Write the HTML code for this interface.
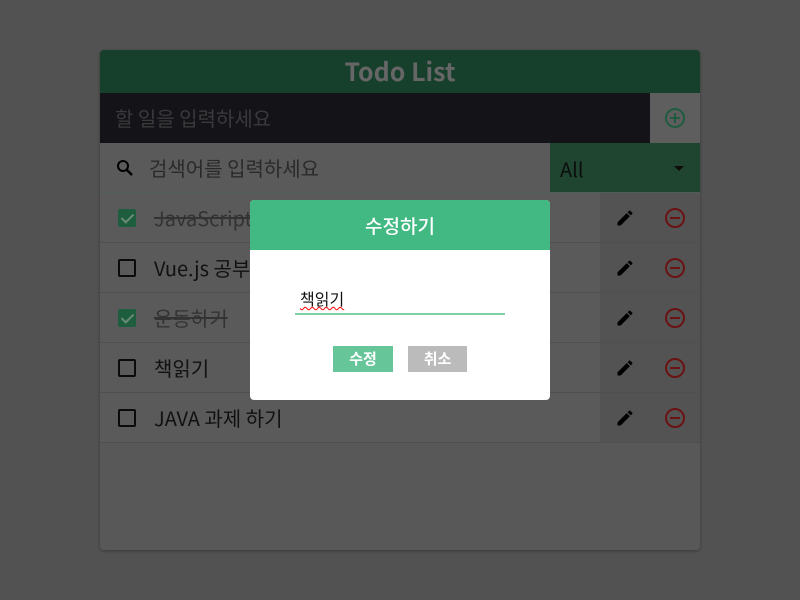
<!DOCTYPE html>
<html><head><meta charset="utf-8"><style>
*{box-sizing:border-box;margin:0;padding:0}
body{width:800px;height:600px;background:#525252;font-family:"Noto Sans CJK KR","Liberation Sans",sans-serif;position:relative;overflow:hidden}
.card{position:absolute;left:100px;top:50px;width:600px;height:500px;background:#585858;border-radius:4px;overflow:hidden;box-shadow:0 1px 3px rgba(0,0,0,.3)}
.hdr{height:43px;background:#163f2c;color:#666;font-weight:bold;font-size:25px;text-align:center;line-height:43px}
.inp{height:50px;display:flex}
.inp .t{flex:1;background:#141418;color:#3a3a3c;font-size:20px;line-height:50px;padding-left:15px}
.inp .p{width:50px;background:#5e5e5e;display:flex;align-items:center;justify-content:center}
.srch{height:50px;display:flex;border-bottom:1px solid #4e5e55;background:#5a5a5a}
.srch .s{flex:1;display:flex;align-items:center;color:#2a2a2a;font-size:20px}
.srch .sel{width:150px;background:#1f4531;color:#0d0d0d;font-size:20px;line-height:52px;padding-left:10px;position:relative}
.srch .sel:after{content:"";position:absolute;right:16px;top:23px;border:5px solid transparent;border-top-color:#0d0d0d;border-bottom:0}
.row{height:50px;display:flex;border-bottom:1px solid #4f4f4f;background:#5a5a5a}
.row .c{width:54px;display:flex;align-items:center;justify-content:center}
.box{width:18px;height:18px;border:2px solid #0b0b0b;border-radius:2px}
.box.on{background:#1e5e3f;border-color:#1e5e3f;position:relative}
.box.on:after{content:"";position:absolute;left:4px;top:0px;width:5px;height:10px;border:solid #6a8a78;border-width:0 2px 2px 0;transform:rotate(45deg)}
.row .tx{flex:1;font-size:20px;line-height:50px;color:#111;padding-left:0}
.row .tx.d{text-decoration:line-through;color:#333}
.row .a{width:100px;background:#535353;display:flex;align-items:center;justify-content:space-around}
.modal{position:absolute;left:250px;top:200px;width:300px;height:200px;background:#fff;border-radius:4px;overflow:hidden}
.mh{height:50px;background:#42b983;color:#fff;font-size:19px;font-weight:500;text-align:center;line-height:52px}
.mi{position:absolute;left:45px;top:84px;width:210px;height:31px;border-bottom:2px solid #7ecfa6;font-size:16px;padding-left:5px;line-height:28px;color:#111}
.mi span{text-decoration:underline wavy red;text-decoration-thickness:1px}
.b{position:absolute;top:146px;height:26px;color:#fff;font-weight:bold;font-size:15px;text-align:center;line-height:26px}
</style></head><body>
<div class="card">
<div class="hdr">Todo List</div>
<div class="inp"><div class="t">할 일을 입력하세요</div><div class="p"><svg width="22" height="22" viewBox="0 0 22 22"><circle cx="11" cy="11" r="9" fill="none" stroke="#1f5c3f" stroke-width="2"/><path d="M11 6v10M6 11h10" stroke="#1f5c3f" stroke-width="2"/></svg></div></div>
<div class="srch"><div class="s"><svg style="margin:0 15px 0 16px" width="18" height="18" viewBox="0 0 18 18"><circle cx="7" cy="7" r="5" fill="none" stroke="#000" stroke-width="2"/><path d="M11 11l5 5" stroke="#000" stroke-width="2.5"/></svg>검색어를 입력하세요</div><div class="sel">All</div></div>
<div class="row"><div class="c"><div class="box on"></div></div><div class="tx d">JavaScript 공부하기</div><div class="a"><svg width="20" height="20" viewBox="0 0 24 24"><path d="M3 17.25V21h3.75L17.81 9.94l-3.75-3.75L3 17.25zM20.71 7.04a1 1 0 000-1.41l-2.34-2.34a1 1 0 00-1.41 0l-1.83 1.83 3.75 3.75 1.83-1.83z" fill="#000"/></svg><svg width="22" height="22" viewBox="0 0 22 22"><circle cx="11" cy="11" r="9" fill="none" stroke="#6b1212" stroke-width="2"/><path d="M6 11h10" stroke="#6b1212" stroke-width="2"/></svg></div></div>
<div class="row"><div class="c"><div class="box"></div></div><div class="tx">Vue.js 공부하기</div><div class="a"><svg width="20" height="20" viewBox="0 0 24 24"><path d="M3 17.25V21h3.75L17.81 9.94l-3.75-3.75L3 17.25zM20.71 7.04a1 1 0 000-1.41l-2.34-2.34a1 1 0 00-1.41 0l-1.83 1.83 3.75 3.75 1.83-1.83z" fill="#000"/></svg><svg width="22" height="22" viewBox="0 0 22 22"><circle cx="11" cy="11" r="9" fill="none" stroke="#6b1212" stroke-width="2"/><path d="M6 11h10" stroke="#6b1212" stroke-width="2"/></svg></div></div>
<div class="row"><div class="c"><div class="box on"></div></div><div class="tx d">운동하기</div><div class="a"><svg width="20" height="20" viewBox="0 0 24 24"><path d="M3 17.25V21h3.75L17.81 9.94l-3.75-3.75L3 17.25zM20.71 7.04a1 1 0 000-1.41l-2.34-2.34a1 1 0 00-1.41 0l-1.83 1.83 3.75 3.75 1.83-1.83z" fill="#000"/></svg><svg width="22" height="22" viewBox="0 0 22 22"><circle cx="11" cy="11" r="9" fill="none" stroke="#6b1212" stroke-width="2"/><path d="M6 11h10" stroke="#6b1212" stroke-width="2"/></svg></div></div>
<div class="row"><div class="c"><div class="box"></div></div><div class="tx">책읽기</div><div class="a"><svg width="20" height="20" viewBox="0 0 24 24"><path d="M3 17.25V21h3.75L17.81 9.94l-3.75-3.75L3 17.25zM20.71 7.04a1 1 0 000-1.41l-2.34-2.34a1 1 0 00-1.41 0l-1.83 1.83 3.75 3.75 1.83-1.83z" fill="#000"/></svg><svg width="22" height="22" viewBox="0 0 22 22"><circle cx="11" cy="11" r="9" fill="none" stroke="#6b1212" stroke-width="2"/><path d="M6 11h10" stroke="#6b1212" stroke-width="2"/></svg></div></div>
<div class="row"><div class="c"><div class="box"></div></div><div class="tx">JAVA 과제 하기</div><div class="a"><svg width="20" height="20" viewBox="0 0 24 24"><path d="M3 17.25V21h3.75L17.81 9.94l-3.75-3.75L3 17.25zM20.71 7.04a1 1 0 000-1.41l-2.34-2.34a1 1 0 00-1.41 0l-1.83 1.83 3.75 3.75 1.83-1.83z" fill="#000"/></svg><svg width="22" height="22" viewBox="0 0 22 22"><circle cx="11" cy="11" r="9" fill="none" stroke="#6b1212" stroke-width="2"/><path d="M6 11h10" stroke="#6b1212" stroke-width="2"/></svg></div></div>
</div>
<div class="modal">
<div class="mh">수정하기</div>
<div class="mi"><span>책읽기</span></div>
<div class="b" style="left:83px;width:60px;background:#66c69a">수정</div>
<div class="b" style="left:158px;width:59px;background:#bbb">취소</div>
</div>
</body></html>
